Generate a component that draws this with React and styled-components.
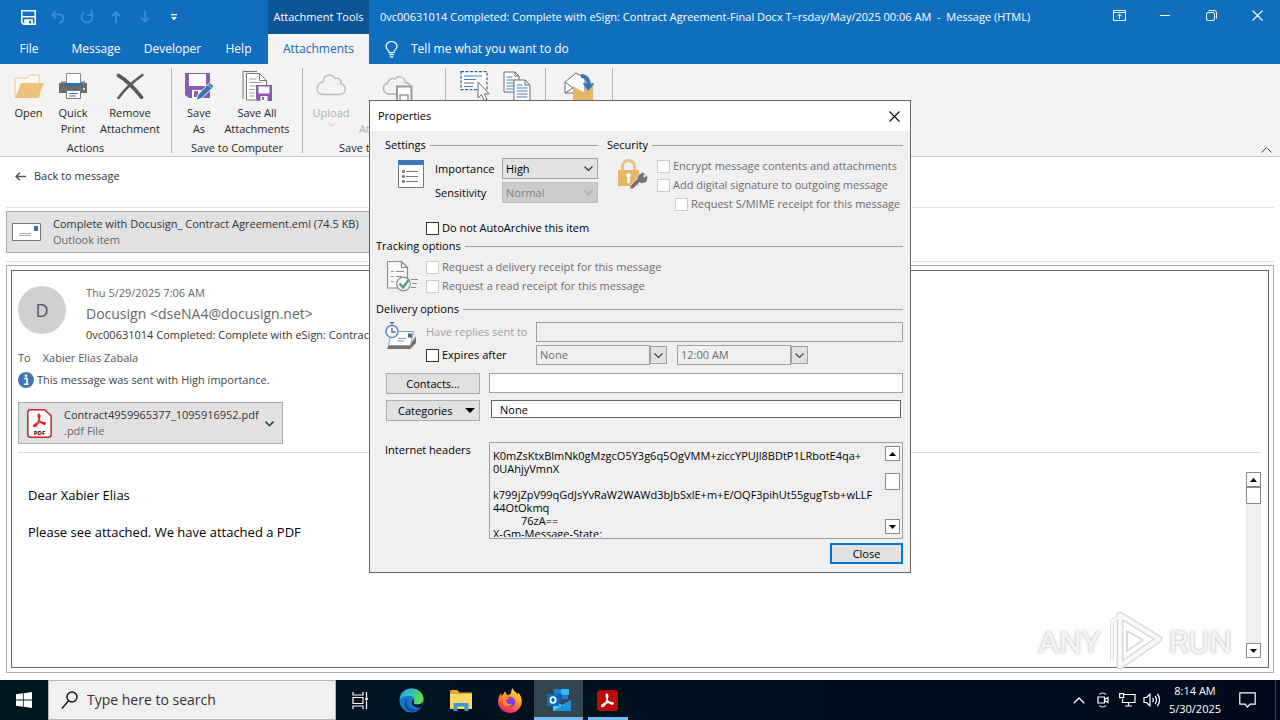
import React from "react";
import styled, { createGlobalStyle } from "styled-components";

function App() {
  return (
    <>
      <GlobalStyle />
      <Screen>
        <MessageWindow>
          <WindowHeader />
          <Ribbon />
          <Message />
        </MessageWindow>
        <Taskbar />
        <Overlay>
          <PropertiesDialog />
        </Overlay>
      </Screen>
    </>
  );
}

function WindowHeader() {
  return (
    <header>
      <TitleBar>
        <QuickAccess>
          <QuickButton aria-label="Save">
            <svg width="15" height="15" viewBox="0 0 15 15">
              <path d="M0.8 0.8h13.4v13.4H2.6L0.8 12.4z" fill="none" stroke="#fff" strokeWidth="1.6" />
              <path d="M1 6.8h13M4 14v-4h7v4" fill="none" stroke="#fff" strokeWidth="1.6" />
              <path d="M5 10.5h3V14H5z" fill="#fff" />
            </svg>
          </QuickButton>
          <QuickButton aria-label="Undo" disabled>
            <svg width="14" height="14" viewBox="0 0 14 14" fill="none" stroke="#3b8edb" strokeWidth="1.8">
              <path d="M5 0.8L1.4 4.4L5 8M1.6 4.4h6.2c6 0 6.2 7.6 0.4 8.2" />
            </svg>
          </QuickButton>
          <QuickButton aria-label="Redo" disabled>
            <svg width="14" height="14" viewBox="0 0 14 14" fill="none" stroke="#3b8edb" strokeWidth="1.8">
              <path d="M4 2.6A5.4 5.4 0 1 0 11.2 3.6M7.4 5.2h4.4V0.6" />
            </svg>
          </QuickButton>
          <QuickButton aria-label="Previous item" disabled>
            <svg width="10" height="12" viewBox="0 0 10 12" fill="none" stroke="#3b8edb" strokeWidth="1.8">
              <path d="M5 12V1.4M1 5.4l4-4 4 4" />
            </svg>
          </QuickButton>
          <QuickButton aria-label="Next item" disabled>
            <svg width="10" height="12" viewBox="0 0 10 12" fill="none" stroke="#3b8edb" strokeWidth="1.8">
              <path d="M5 0v10.6M1 6.6l4 4 4-4" />
            </svg>
          </QuickButton>
          <QuickButton aria-label="Customize Quick Access Toolbar">
            <svg width="6" height="7" viewBox="0 0 6 7" fill="#fff">
              <path d="M0 0h6v1.2H0zM0 3h6L3 6.4z" />
            </svg>
          </QuickButton>
        </QuickAccess>
        <ToolsLabel>Attachment Tools</ToolsLabel>
        <WindowTitle>
          0vc00631014 Completed: Complete with eSign: Contract Agreement-Final Docx T=rsday/May/2025 00:06 AM
          &nbsp;-&nbsp; Message (HTML)
        </WindowTitle>
        <WindowButton aria-label="Ribbon Display Options">
          <svg width="13" height="11" viewBox="0 0 13 11" fill="none" stroke="#fff">
            <path d="M0.5 0.5h12v10h-12zM0.5 2.5h12M6.5 9V4.4M4.3 6.4l2.2-2.2 2.2 2.2" />
          </svg>
        </WindowButton>
        <WindowButton aria-label="Minimize">
          <svg width="10" height="11" viewBox="0 0 10 11" stroke="#fff">
            <path d="M0 5.5h10" />
          </svg>
        </WindowButton>
        <WindowButton aria-label="Restore">
          <svg width="11" height="11" viewBox="0 0 11 11" fill="none" stroke="#fff">
            <rect x="0.5" y="2.5" width="8" height="8" rx="1.5" />
            <path d="M2.5 0.5h6a2 2 0 0 1 2 2v6" />
          </svg>
        </WindowButton>
        <WindowButton aria-label="Close window">
          <CloseGlyph color="#fff" />
        </WindowButton>
      </TitleBar>
      <TabBar>
        <Tabs>
          <Tab $width={58}>File</Tab>
          <Tab $width={76}>Message</Tab>
          <Tab $width={77}>Developer</Tab>
          <Tab $width={55}>Help</Tab>
        </Tabs>
        <ActiveTab>Attachments</ActiveTab>
        <TellMe>
          <svg width="13" height="17" viewBox="0 0 13 17" fill="none" stroke="#fff" strokeWidth="1.2">
            <path d="M4.2 11.6C4.2 9 1 8.6 1 5.6a5.4 5 0 0 1 11 0c0 3-3.2 3.4-3.2 6zM4.2 13.6h4.6M4.8 15.8h3.4" />
          </svg>
          Tell me what you want to do
        </TellMe>
      </TabBar>
    </header>
  );
}

function Ribbon() {
  return (
    <RibbonBar>
      <RibbonGroup $width={172}>
        <RibbonButtons>
          <RibbonButton $width={41}>
            <OpenIcon />
            Open
          </RibbonButton>
          <RibbonButton $width={48}>
            <PrinterIcon />
            Quick Print
          </RibbonButton>
          <RibbonButton $width={66}>
            <svg width="30" height="30" viewBox="0 0 30 30" fill="none" stroke="#595959" strokeLinecap="round">
              <path d="M3.4 4.4C11 9 20 18 26.6 26.4" strokeWidth="3.6" />
              <path d="M27.4 4C19 10 9 19 3.4 27" strokeWidth="2.6" />
            </svg>
            Remove Attachment
          </RibbonButton>
        </RibbonButtons>
        <GroupLabel>Actions</GroupLabel>
      </RibbonGroup>
      <RibbonGroup $width={131}>
        <RibbonButtons>
          <RibbonButton $width={40}>
            <SaveAsIcon />
            <span>
              Save
              <br />
              As
            </span>
          </RibbonButton>
          <RibbonButton $width={76}>
            <SaveAllIcon />
            Save All Attachments
          </RibbonButton>
        </RibbonButtons>
        <GroupLabel>Save to Computer</GroupLabel>
      </RibbonGroup>
      <RibbonGroup $width={143}>
        <RibbonButtons $start>
          <RibbonButton $width={52} disabled>
            <svg width="32" height="30" viewBox="0 0 32 30" fill="none" stroke="#b9b9b9" strokeWidth="1.3">
              <path d={CLOUD} />
            </svg>
            Upload
            <Chevron color="#b9b9b9" size={7} />
          </RibbonButton>
          <RibbonButton $width={82} disabled>
            <svg width="32" height="30" viewBox="0 0 32 30" fill="none" stroke="#b0b0b0" strokeWidth="1.3">
              <path d="M14 23H6.500a5.500 5.500 0 0 1-0.800-10.800C6 8.500 10 6.500 13 8c3-4.500 10-2 10 3.500 3 0 5.500 2 5.500 4" />
              <path d="M15 15.600h14.400V30H15z" fill="#fff" stroke="#9a9a9a" strokeWidth="2" />
              <path d="M18 29v-5h8v5" stroke="#9a9a9a" strokeWidth="1.600" />
            </svg>
            Save All
            <SplitLabel>
              Attachments
              <Chevron color="#b9b9b9" size={7} />
            </SplitLabel>
          </RibbonButton>
        </RibbonButtons>
        <GroupLabel>Save to Cloud</GroupLabel>
      </RibbonGroup>
      <RibbonGroup $width={100}>
        <RibbonButtons>
          <RibbonButton $width={42} aria-label="Select All">
            <svg width="30" height="30" viewBox="0 0 30 30" fill="none">
              <path d="M1 0.700h26v18H1z" fill="#fff" stroke="#33618c" strokeWidth="1.200" strokeDasharray="3 1.500" />
              <path d="M4 5h18M4 8.500h12M4 12h10M4 15.500h9" stroke="#3f7ebd" strokeWidth="1.200" />
              <path d="M18 11v16l3.600-3.400 2.800 6 2.600-1.200-2.800-5.600h5z" fill="#fff" stroke="#6b6b6b" />
            </svg>
          </RibbonButton>
          <RibbonButton $width={42} aria-label="Copy">
            <svg width="28" height="30" viewBox="0 0 28 30" fill="#fff" stroke="#6b6b6b">
              <path d="M1 1h11l4 4v16H1zM12 1v4h4" />
              <path d="M3.500 6h6M3.500 9h10M3.500 12h10M3.500 15h10M3.500 18h8" stroke="#3f7ebd" />
              <path d="M11 9h11l5 5v16H11zM22 9v5h5" />
              <path d="M13.500 14h6M13.500 17h11M13.500 20h11M13.500 23h11M13.500 26h11" stroke="#3f7ebd" />
            </svg>
          </RibbonButton>
        </RibbonButtons>
      </RibbonGroup>
      <RibbonGroup $width={67}>
        <RibbonButtons>
          <RibbonButton $width={54} aria-label="Show Message">
            <svg width="30" height="30" viewBox="0 0 30 30" fill="none">
              <path d="M1 22V11L12 2l9 5v15z" fill="#fff" stroke="#6b6b6b" />
              <path d="M1 11l8 6-8 5" stroke="#6b6b6b" />
              <path d="M9 15l10 6 10-6v15H9z" fill="#e8b766" />
              <path d="M17 5c6 0 8 5 8 10" stroke="#3a76b0" strokeWidth="4" />
              <path d="M18.500 12h4l2.500 3 3-3h1.500v2L24 20z" fill="#3a76b0" />
            </svg>
          </RibbonButton>
        </RibbonButtons>
      </RibbonGroup>
      <CollapseButton aria-label="Collapse the Ribbon">
        <svg width="11" height="6" viewBox="0 0 11 6" fill="none" stroke="#444">
          <path d="M0.500 5.500l5-5 5 5" />
        </svg>
      </CollapseButton>
    </RibbonBar>
  );
}

function Message() {
  return (
    <MessageArea>
      <BackRow>
        <BackButton>
          <svg width="11" height="9" viewBox="0 0 11 9" fill="none" stroke="#555" strokeWidth="1.500">
            <path d="M11 4.500H1M4.800 0.700L1 4.500l3.800 3.800" />
          </svg>
          Back to message
        </BackButton>
      </BackRow>
      <AttachmentStrip>
        <Attachment $width={420}>
          <svg width="29" height="18" viewBox="0 0 29 18">
            <path d="M0.500 0.500h28v17h-28z" fill="#fff" stroke="#777" />
            <path d="M22 3h4v5h-4z" fill="#3d6ea8" />
            <path d="M7 10.500h12M7 12.500h12" stroke="#aaa" />
          </svg>
          <FileText>
            <span>Complete with Docusign_ Contract Agreement.eml (74.5 KB)</span>
            <small>Outlook item</small>
          </FileText>
        </Attachment>
      </AttachmentStrip>
      <OuterFrame>
        <InnerFrame>
          <Sender>
            <Avatar>D</Avatar>
            <SenderText>
              <p>Thu 5/29/2025 7:06 AM</p>
              <h2>Docusign &lt;dseNA4@docusign.net&gt;</h2>
              <h1>0vc00631014 Completed: Complete with eSign: Contract Agreement-Final Docx</h1>
            </SenderText>
          </Sender>
          <Recipient>
            <span>To</span> Xabier Elias Zabala
          </Recipient>
          <InfoBar>
            <svg width="16" height="16" viewBox="0 0 16 16">
              <circle cx="8" cy="8" r="8" fill="#3e78b3" />
              <path d="M6.200 6.500H9V12h1.200M5.800 12.300h4.600" stroke="#fff" strokeWidth="1.600" fill="none" />
              <circle cx="8" cy="3.700" r="1.300" fill="#fff" />
            </svg>
            This message was sent with High importance.
          </InfoBar>
          <Attachment $width={265} $inset>
            <PdfIcon />
            <FileText>
              <span>Contract4959965377_1095916952.pdf</span>
              <small>.pdf File</small>
            </FileText>
            <Chevron color="#444" size={9} weight={1.6} />
          </Attachment>
          <BodyArea>
            <BodyText>
              <p>Dear Xabier Elias</p>
              <p>Please see attached. We have attached a PDF</p>
            </BodyText>
            <ScrollBar />
          </BodyArea>
        </InnerFrame>
      </OuterFrame>
      <Watermark>
        <span>ANY</span>
        <svg width="56" height="62" viewBox="0 0 56 62" fill="none" strokeLinejoin="round">
          <path d="M13 4l39 24-39 27z" stroke="#d9d9d9" strokeWidth="7" />
          <path d="M13 4l39 24-39 27z" stroke="#f9f9f9" strokeWidth="4" />
          <path d="M5 50V10l6-3" stroke="#dedede" strokeWidth="4" />
          <path d="M5 50V10l6-3" stroke="#fafafa" strokeWidth="2" />
          <path d="M20 20l16 9-16 11z" stroke="#dadada" strokeWidth="2" />
        </svg>
        <span>RUN</span>
      </Watermark>
    </MessageArea>
  );
}

function PropertiesDialog() {
  return (
    <Dialog role="dialog" aria-labelledby="dialog-title">
      <DialogTitle>
        <span id="dialog-title">Properties</span>
        <DialogClose aria-label="Close dialog">
          <CloseGlyph color="#000" />
        </DialogClose>
      </DialogTitle>
      <DialogBody>
        <TopSections>
          <Section $left={9}>
            <Legend>Settings</Legend>
            <SettingsGrid>
              <svg width="26" height="28" viewBox="0 0 26 28">
                <path d="M0.500 1h25v26.500h-25z" fill="#fff" stroke="#777" />
                <path d="M0 0h26v5H0z" fill="#3c76b4" />
                <path d="M8 11.500h12M8 16.500h12M8 21.500h12" stroke="#777" />
                <path d="M4 11.500h3M4 16.500h3M4 21.500h3" stroke="#777" strokeWidth="2.400" />
              </svg>
              <label htmlFor="importance">Importance</label>
              <SelectBox>
                <select id="importance" defaultValue="High">
                  <option>High</option>
                </select>
                <Chevron color="#333" size={9} />
              </SelectBox>
              <label htmlFor="sensitivity">Sensitivity</label>
              <SelectBox $disabled>
                <select id="sensitivity" defaultValue="Normal" disabled>
                  <option>Normal</option>
                </select>
                <Chevron color="#a5a5a5" size={9} />
              </SelectBox>
            </SettingsGrid>
            <ArchiveRow>
              <Check label="Do not AutoArchive this item" />
            </ArchiveRow>
          </Section>
          <Section>
            <Legend>Security</Legend>
            <SecurityRow>
              <LockIcon />
              <CheckList>
                <Check label="Encrypt message contents and attachments" disabled />
                <Check label="Add digital signature to outgoing message" disabled />
                <Check label="Request S/MIME receipt for this message" disabled indent />
              </CheckList>
            </SecurityRow>
          </Section>
        </TopSections>

        <Legend>Tracking options</Legend>
        <TrackingRow>
          <TrackingIcon />
          <CheckList>
            <Check label="Request a delivery receipt for this message" disabled />
            <Check label="Request a read receipt for this message" disabled />
          </CheckList>
        </TrackingRow>

        <Legend>Delivery options</Legend>
        <DeliveryGrid>
          <DeliveryIcon />
          <MutedLabel htmlFor="replies">Have replies sent to</MutedLabel>
          <TextBox id="replies" disabled />
          <Check label="Expires after" />
          <ExpiryFields>
            <ComboBox label="Expiry date" value="None" />
            <ComboBox label="Expiry time" value="12:00 AM" />
          </ExpiryFields>
        </DeliveryGrid>

        <ContactsGrid>
          <DialogButton>Contacts...</DialogButton>
          <TextBox aria-label="Contacts" />
          <DialogButton $menu>
            <span>
              Cate<u>g</u>ories
            </span>
            <svg width="10" height="5" viewBox="0 0 10 5">
              <path d="M0 0h10L5 5z" />
            </svg>
          </DialogButton>
          <CategoriesBox aria-label="Categories" defaultValue="None" />
        </ContactsGrid>

        <HeadersRow>
          <label htmlFor="headers">Internet headers</label>
          <HeadersBox>
            <textarea id="headers" defaultValue={HEADERS} spellCheck={false} />
            <ScrollBar small />
          </HeadersBox>
        </HeadersRow>
        <DialogFooter>
          <DefaultButton>Close</DefaultButton>
        </DialogFooter>
      </DialogBody>
    </Dialog>
  );
}

function Check({ label, disabled, indent }) {
  return (
    <CheckLabel $disabled={disabled} $indent={indent}>
      <input type="checkbox" disabled={disabled} />
      {label}
    </CheckLabel>
  );
}

function ComboBox({ label, value }) {
  return (
    <Combo>
      <select aria-label={label} defaultValue={value} disabled>
        <option>{value}</option>
      </select>
      <span>
        <Chevron color="#444" size={9} />
      </span>
    </Combo>
  );
}

function ScrollBar({ small }) {
  return (
    <ScrollTrack $small={small}>
      <button aria-label="Scroll up">
        <svg width="7" height="4" viewBox="0 0 7 4">
          <path d="M0 4h7L3.500 0z" />
        </svg>
      </button>
      <i />
      <button aria-label="Scroll down">
        <svg width="7" height="4" viewBox="0 0 7 4">
          <path d="M0 0h7L3.500 4z" />
        </svg>
      </button>
    </ScrollTrack>
  );
}

function Taskbar() {
  return (
    <TaskbarRow>
      <TaskButton aria-label="Start">
        <svg width="16" height="16" viewBox="0 0 16 16" fill="#fff">
          <path d="M0 2.300L6.900 1.300v6.300H0zM7.700 1.200L16 0v7.600H7.700zM0 8.400h6.900v6.300L0 13.700zM7.700 8.400H16V16l-8.300-1.200z" />
        </svg>
      </TaskButton>
      <SearchBox>
        <svg width="17" height="19" viewBox="0 0 17 19" fill="none" stroke="#111" strokeWidth="1.400">
          <circle cx="11" cy="6" r="5" />
          <path d="M7.500 9.800L1 17.500" />
        </svg>
        <input aria-label="Search" placeholder="Type here to search" />
      </SearchBox>
      <TaskButton aria-label="Task View">
        <svg width="17" height="17" viewBox="0 0 17 17" fill="none" stroke="#fff" strokeWidth="1.200">
          <path d="M1 0v3h10V0M1 5.500h10v6H1zM1 17v-3h10v3M14.500 0v5M14.500 8.500V17" />
          <path d="M13.300 5.500h2.500V8h-2.500z" fill="#fff" stroke="none" />
        </svg>
      </TaskButton>
      <Apps>
        <AppButton aria-label="Microsoft Edge">
          <EdgeIcon />
        </AppButton>
        <AppButton aria-label="File Explorer">
          <svg width="22" height="21" viewBox="0 0 22 21">
            <path d="M0 1.500C0 0.700 0.600 0 1.400 0h6L9.500 2.500H22V8H0z" fill="#e3a52a" />
            <path d="M0 4h22v15H0z" fill="#fbd765" />
            <path d="M3.500 21v-8h15v8h-4v-4.500h-7V21z" fill="#3f95d6" />
          </svg>
        </AppButton>
        <AppButton aria-label="Firefox">
          <FirefoxIcon />
        </AppButton>
        <AppButton aria-label="Outlook" $active>
          <svg width="24" height="24" viewBox="0 0 24 24">
            <path d="M7 1h14v10H7z" fill="#1a7fd4" />
            <path d="M14 1h8v6h-8z" fill="#35b8f1" />
            <path d="M7 6h8v8H7z" fill="#0f5ca8" />
            <path d="M6 12l9 5 9-5v11H6z" fill="#4fc3f4" />
            <path d="M6 23l18-11v11z" fill="#1f8fdd" />
            <path d="M0 6h12v12H0z" fill="#0f6cbd" />
            <ellipse cx="6" cy="12" rx="2.600" ry="3" fill="none" stroke="#fff" strokeWidth="1.700" />
          </svg>
        </AppButton>
        <AppButton aria-label="Adobe Acrobat" $running>
          <svg width="21" height="21" viewBox="0 0 21 21" fill="none">
            <rect width="21" height="21" rx="3" fill="#b80c06" />
            <path d={ACROBAT} stroke="#fff" strokeWidth="1.400" />
          </svg>
        </AppButton>
      </Apps>
      <Tray>
        <TrayButton aria-label="Show hidden icons">
          <svg width="12" height="7" viewBox="0 0 12 7" fill="none" stroke="#fff" strokeWidth="1.300">
            <path d="M0.700 6.300L6 1l5.300 5.300" />
          </svg>
        </TrayButton>
        <TrayButton aria-label="Meet Now">
          <svg width="12" height="16" viewBox="0 0 12 16" fill="none" stroke="#fff" strokeWidth="1.200">
            <path d="M1 5h6.500v6H1zM7.500 7.500L11 5.500v5l-3.500-2M2.500 2.500C4 0.500 7.500 0.500 9 2.500M2.500 13.500c1.500 2 5 2 6.500 0" />
          </svg>
        </TrayButton>
        <TrayButton aria-label="Network">
          <svg width="17" height="14" viewBox="0 0 17 14" fill="none" stroke="#fff" strokeWidth="1.200">
            <path d="M5 1.500h11v8H3.500V6M0.600 0.600h4v4h-4zM9.500 9.500V13M6 13h7" />
          </svg>
        </TrayButton>
        <TrayButton aria-label="Volume">
          <svg width="17" height="14" viewBox="0 0 17 14" fill="none" stroke="#fff" strokeWidth="1.200">
            <path d="M1 4.500h2.500L7 1.200v11.600L3.500 9.500H1zM9.500 5c1 1.200 1 2.800 0 4M12 3c2 2.200 2 5.800 0 8M14.300 1c3 3.300 3 8.700 0 12" />
          </svg>
        </TrayButton>
        <Clock>
          <span>8:14 AM</span>
          <span>5/30/2025</span>
        </Clock>
        <NotificationButton aria-label="Notifications">
          <svg width="17" height="16" viewBox="0 0 17 16" fill="none" stroke="#fff" strokeWidth="1.200">
            <path d="M0.800 0.800h15.400v11.400h-5.200L8.500 15 6 12.200H0.800z" />
          </svg>
        </NotificationButton>
      </Tray>
    </TaskbarRow>
  );
}

/* Icons */

const CLOUD =
  "M8 23.500h17a5.500 5.500 0 0 0 1-10.800c1-4-3-6.500-6-5C17 2 8 3.500 8.500 11 1 11-1 23 8 23.500z";

const ACROBAT =
  "M9.800 4.200c1.800 0 0.600 5.200-0.600 8-0.900 2-2.400 4.400-3.800 4.400-1.700-0.400 0.600-3 4.200-3.800 2.800-0.700 6.800-0.700 6.600 0.800-0.200 1.300-3.200 0.200-5-2.200C9.600 9.200 8.600 4.400 9.800 4.200z";

function CloseGlyph({ color }) {
  return (
    <svg width="11" height="11" viewBox="0 0 11 11" stroke={color} strokeWidth="1.100">
      <path d="M0.500 0.500l10 10M10.500 0.500l-10 10" />
    </svg>
  );
}

function Chevron({ color, size, weight = 1.2 }) {
  return (
    <svg width={size} height={size} viewBox="0 0 9 9" fill="none" stroke={color} strokeWidth={weight}>
      <path d="M0.500 2.500l4 4 4-4" />
    </svg>
  );
}

function OpenIcon() {
  return (
    <svg width="30" height="30" viewBox="0 0 30 30">
      <path d="M1 26V7h12l2.500-3H25v22z" fill="#fffaf0" stroke="#ecc68c" />
      <path d="M1 27l6-15h23l-6 15z" fill="#ecc27c" />
    </svg>
  );
}

function PrinterIcon() {
  return (
    <svg width="30" height="30" viewBox="0 0 30 30">
      <path d="M1 12h28v10H1z" fill="#6a6a6a" />
      <path d="M3 10.500h24V13H3z" fill="#7b7b7b" />
      <path d="M8.500 2.500h14v10h-14z" fill="#fff" stroke="#888" />
      <path d="M7 12h17v3H7z" fill="#2f70b0" />
      <path d="M8.500 19.500h14v8h-14z" fill="#fff" stroke="#777" />
      <path d="M11 22.500h9M11 25h7" stroke="#3f7ebd" strokeWidth="1.200" />
      <circle cx="26" cy="18" r="1" fill="#fff" />
    </svg>
  );
}

function SaveAsIcon() {
  return (
    <svg width="30" height="30" viewBox="0 0 30 30">
      <path d="M1 2h25v25H5l-4-3z" fill="#8a5bb0" />
      <path d="M5 3h17v12H5z" fill="#fff" />
      <path d="M8 19h11v8H8z" fill="#fff" />
      <path d="M10 20h4v6h-4z" fill="#8a5bb0" />
      <path d="M12 29.500l2-6L26 11.500l4 4L18 27z" fill="#3a76b0" stroke="#f3f3f3" />
      <path d="M24 13.500l4 4" stroke="#cfe0f0" />
    </svg>
  );
}

function SaveAllIcon() {
  return (
    <svg width="30" height="30" viewBox="0 1 30 30">
      <path d="M1 29V1.500h14" fill="none" stroke="#777" />
      <path d="M4.500 3.500h13l7 7V30h-20z" fill="#fff" stroke="#777" />
      <path d="M17.500 3.500v7h7" fill="none" stroke="#777" />
      <path d="M7.500 9h7M7.500 12.500h12M7.500 16h7M7.500 19.500h5M7.500 23h5M7.500 26h5" stroke="#999" />
      <path d="M14 15h16v16H16l-2-2z" fill="#8a5bb0" />
      <path d="M16.500 16.500h11v7h-11zM18.500 26h7v5h-7z" fill="#fff" />
      <path d="M20 27h2v3h-2z" fill="#8a5bb0" />
    </svg>
  );
}

function PdfIcon() {
  return (
    <svg width="25" height="29" viewBox="0 0 25 29">
      <path d="M3.500 0.800h14l6.700 6v18.700c0 1.500-1 2.700-2.700 2.700h-18c-1.700 0-2.700-1-2.700-2.700V3.500c0-1.700 1-2.700 2.700-2.700z" fill="#fff" stroke="#cc1f2c" strokeWidth="1.500" />
      <path d={ACROBAT} transform="translate(2 1)" fill="none" stroke="#e02626" strokeWidth="1.500" />
      <text x="12.500" y="25.500" fontSize="6" fontWeight="700" fontFamily="Open Sans, sans-serif" textAnchor="middle">
        PDF
      </text>
    </svg>
  );
}

function LockIcon() {
  return (
    <svg width="32" height="32" viewBox="0 0 32 32" fill="none">
      <path d="M5.500 12V8.500a6 6 0 0 1 12 0V12" stroke="#ecc27c" strokeWidth="3" />
      <path d="M1 12h21v16H1z" fill="#e8b766" />
      <path d="M11.500 15a2.500 2.500 0 0 1 1.300 4.600V25h-2.600v-5.400A2.500 2.500 0 0 1 11.500 15z" fill="#fff" />
      <path d="M21 17l5-3 5 5-1.500 5.500-5.500 1-1.500-1-6.500 6.500h-3v-3l7-7z" fill="#737373" stroke="#f0f0f0" strokeWidth="0.800" />
      <circle cx="27.500" cy="18" r="1.200" fill="#fff" />
    </svg>
  );
}

function TrackingIcon() {
  return (
    <svg width="31" height="31" viewBox="0 0 31 31" fill="none" stroke="#8a8a8a">
      <path d="M0.500 0.500h14l6 6V27h-20z" fill="#f9f9f9" strokeWidth="1.200" />
      <path d="M14.500 0.500v6h6M4 10.500h2.500M4 15.500h2.500M4 20.500h2.500M9 10.500h8M9 15.500h6M9 20.500h2M24 18.500h7M25 22.500h5M24 26.500h5" strokeWidth="1.200" />
      <circle cx="16.500" cy="23" r="6.800" fill="#f6f6f6" strokeWidth="1.200" />
      <path d="M12.500 22.500l3.500 4 6-8" stroke="#5f9c86" strokeWidth="2.400" />
    </svg>
  );
}

function DeliveryIcon() {
  return (
    <svg width="32" height="29" viewBox="0 0 32 29" fill="none">
      <path d="M5 19l-3 8h23l6-6v-7l-4 6H5z" fill="#737373" />
      <path d="M6.500 9.500h22l-3 14H3.500z" fill="#fff" stroke="#9a9a9a" />
      <path d="M23 11.500h4v4h-4z" fill="#3c6ea6" />
      <path d="M13 16.500h8M12 19h7" stroke="#999" />
      <circle cx="7" cy="9.500" r="6" fill="#f7f7f7" stroke="#5d8fc4" strokeWidth="1.600" />
      <path d="M7 0v3M5 0.600h4M7 6v4h3.500" stroke="#4c6f93" strokeWidth="1.300" />
    </svg>
  );
}

function EdgeIcon() {
  return (
    <svg width="25" height="25" viewBox="0 0 25 25">
      <defs>
        <linearGradient id="edge-top" x1="0" y1="0" x2="1" y2="0.400">
          <stop offset="0" stopColor="#1ba3e0" />
          <stop offset="0.500" stopColor="#35c1b8" />
          <stop offset="1" stopColor="#66d84e" />
        </linearGradient>
      </defs>
      <circle cx="12.500" cy="12.500" r="12" fill="#1476cc" />
      <path d="M0.500 12C1 5 6 0.500 12.500 0.500c7 0 12 5 12 10 0 4-3 6-6 6-2.500 0-4-1-3.500-2 1-2 0.500-6-4-6.500C6 7.500 2 9 0.500 12z" fill="url(#edge-top)" />
      <path d="M8.500 11C6 16 10 22 17 21.500c2 0 4-1 5.500-2.500-5 7.500-16 6-17-2.500C5.200 14 6.500 12 8.500 11z" fill="#0f4f9c" />
      <path d="M14.800 14.500c-0.500 1 1 2.200 3.700 2.100 2.500 0 4-1 5.500-3L22.800 19c-4 2-10-0.500-10-4.500 0-1.500 1-2.500 2-3z" fill="#001722" />
    </svg>
  );
}

function FirefoxIcon() {
  return (
    <svg width="24" height="25" viewBox="0 0 24 25">
      <defs>
        <linearGradient id="fox" x1="0.800" y1="0" x2="0.300" y2="1">
          <stop offset="0" stopColor="#fff04a" />
          <stop offset="0.450" stopColor="#ff9324" />
          <stop offset="1" stopColor="#f5156c" />
        </linearGradient>
      </defs>
      <path d="M14.500 0c0.500 3 4 4.500 5.500 6.500L20 4.500c3 3 4 6 3.800 9.500C23.500 20 18.500 25 12 25S0 20 0 13.500C0 10 1.500 7 3 5l0.500 3C5 6.500 6 5.500 6.500 3.500 8 4.500 8.500 6 9 7c2 0 3-0.500 4-1.500C13 3.500 13.500 1.500 14.500 0z" fill="url(#fox)" />
      <circle cx="12" cy="14" r="5.200" fill="#7a40d8" />
      <path d="M4 10c3-2 6-1 8 0.500-2 0-2.500 1.500-4 2 0 3 3 4.500 6 3.500-2 3.500-8 3-9-1z" fill="#ff8a1f" />
    </svg>
  );
}

const HEADERS = `K0mZsKtxBlmNk0gMzgcO5Y3g6q5OgVMM+ziccYPUJl8BDtP1LRbotE4qa+
0UAhjyVmnX

k799jZpV99qGdJsYvRaW2WAWd3bJbSxlE+m+E/OQF3pihUt55gugTsb+wLLF
44OtOkmq
\t76zA==
X-Gm-Message-State:`;

/* Base */

const GlobalStyle = createGlobalStyle`
  *, *::before, *::after {
    box-sizing: border-box;
  }

  body {
    margin: 0;
    font-family: "Open Sans", "Noto Sans", sans-serif;
    font-size: 11px;
    line-height: 16px;
    color: #000;
  }

  h1, h2, p {
    margin: 0;
    font-weight: 400;
  }

  button, input, select, textarea {
    margin: 0;
    padding: 0;
    border: 0;
    border-radius: 0;
    background: none;
    font: inherit;
    color: inherit;
  }

  svg {
    display: block;
    flex-shrink: 0;
  }
`;

const Screen = styled.div`
  position: relative;
  display: flex;
  flex-direction: column;
  min-height: 100vh;
  background: #fff;
`;

const MessageWindow = styled.main`
  flex: 1;
  display: flex;
  flex-direction: column;
`;

/* Window header */

const TitleBar = styled.div`
  display: flex;
  height: 34px;
  background: #106ebe;
  color: #fff;
`;

const QuickAccess = styled.div`
  display: flex;
  width: 268px;
  padding-left: 14px;
`;

const QuickButton = styled.button`
  display: grid;
  place-items: center;
  width: 29px;
`;

const ToolsLabel = styled.div`
  display: grid;
  place-items: center;
  width: 101px;
  background: #0c5595;
  font-size: 11px;
  white-space: nowrap;
`;

const WindowTitle = styled.div`
  flex: 1;
  align-self: center;
  padding-left: 11px;
  line-height: 18px;
  white-space: nowrap;
`;

const WindowButton = styled.button`
  display: grid;
  justify-items: center;
  align-content: start;
  width: 46px;
  padding-top: 10px;
`;

const TabBar = styled.nav`
  display: flex;
  height: 30px;
  background: #106ebe;
  color: #fff;
  font-size: 12px;
`;

const Tabs = styled.div`
  display: flex;
  width: 268px;
`;

const Tab = styled.button`
  width: ${({ $width }) => $width}px;
  text-align: center;
`;

const ActiveTab = styled.button`
  width: 101px;
  background: #f3f3f3;
  color: #1b64a8;
`;

const TellMe = styled.button`
  display: flex;
  align-items: center;
  gap: 13px;
  padding-left: 16px;
`;

/* Ribbon */

const RibbonBar = styled.section`
  display: flex;
  height: 93px;
  padding: 4px 0 3px;
  background: #f3f3f3;
  border-bottom: 1px solid #c8c8c8;
  color: #262626;
`;

const RibbonGroup = styled.div`
  display: flex;
  flex-direction: column;
  justify-content: space-between;
  width: ${({ $width }) => $width}px;
  border-right: 1px solid #b4b4b4;
`;

const RibbonButtons = styled.div`
  display: flex;
  justify-content: ${({ $start }) => ($start ? "flex-start" : "center")};
  padding-left: ${({ $start }) => ($start ? 2 : 0)}px;
`;

const RibbonButton = styled.button`
  display: flex;
  flex-direction: column;
  align-items: center;
  gap: 0;
  width: ${({ $width }) => $width}px;
  padding-top: 3px;
  line-height: 16px;
  color: ${({ disabled }) => (disabled ? "#b1b1b1" : "#262626")};

  > svg:first-child {
    margin-bottom: 4px;
  }
`;

const SplitLabel = styled.span`
  display: flex;
  align-items: center;
  gap: 6px;
`;

const GroupLabel = styled.div`
  text-align: center;
  line-height: 10px;
`;

const CollapseButton = styled.button`
  align-self: flex-end;
  margin-left: auto;
  padding: 0 8px 0 0;
`;

/* Message */

const MessageArea = styled.div`
  position: relative;
  flex: 1;
  display: flex;
  flex-direction: column;
  padding: 0 6px 7px;
`;

const BackRow = styled.div`
  height: 51px;
  padding: 11px 9px;
  border-bottom: 1px solid #e1e1e1;
`;

const BackButton = styled.button`
  display: flex;
  align-items: center;
  gap: 8px;
  color: #333;
`;

const AttachmentStrip = styled.div`
  padding: 3px 0 8px;
  border-bottom: 1px solid #e1e1e1;
`;

const Attachment = styled.button`
  display: flex;
  align-items: center;
  width: ${({ $width }) => $width}px;
  height: 42px;
  margin-top: ${({ $inset }) => ($inset ? 14 : 0)}px;
  padding: 0 ${({ $inset }) => ($inset ? 8 : 5)}px;
  background: #e1e1e1;
  border: 1px solid #ababab;
  text-align: left;

  > svg:first-child {
    margin-right: 12px;
  }
`;

const FileText = styled.span`
  flex: 1;
  min-width: 0;
  display: flex;
  flex-direction: column;
  color: #333;
  white-space: nowrap;

  small {
    font-size: 11px;
    color: #666;
  }
`;

const OuterFrame = styled.div`
  flex: 1;
  display: flex;
  margin-top: 3px;
  padding: 4px;
  border: 1px solid #ababab;
`;

const InnerFrame = styled.article`
  flex: 1;
  display: flex;
  flex-direction: column;
  padding: 14px 7px 9px 6px;
  border: 1px solid #666;
  color: #444;
`;

const Sender = styled.div`
  display: flex;
  gap: 20px;
`;

const Avatar = styled.div`
  display: grid;
  place-items: center;
  width: 48px;
  height: 48px;
  margin-top: 1px;
  border-radius: 50%;
  background: #d0d0d0;
  color: #555;
  font-size: 18px;
`;

const SenderText = styled.div`
  p {
    color: #666;
  }

  h2 {
    font-size: 14px;
    line-height: 26px;
    color: #666;
  }

  h1 {
    font-size: 11px;
    line-height: 16px;
    color: #333;
  }
`;

const Recipient = styled.div`
  display: flex;
  gap: 12px;
  margin-top: 7px;
  color: #555;
`;

const InfoBar = styled.div`
  display: flex;
  gap: 3px;
  margin-top: 6px;
`;

const BodyArea = styled.div`
  flex: 1;
  display: flex;
  justify-content: space-between;
  margin-top: 8px;
  padding-top: 19px;
  border-top: 1px solid #d9d9d9;
`;

const BodyText = styled.div`
  display: flex;
  flex-direction: column;
  gap: 19px;
  padding: 14px 10px;
  font-size: 13px;
  line-height: 18px;
  color: #000;
`;

const ScrollTrack = styled.div`
  display: flex;
  flex-direction: column;
  width: 15px;
  background: #f0f0f0;

  button {
    display: grid;
    place-items: center;
    height: 15px;
    background: #fff;
    border: 1px solid #8a8a8a;
  }

  i {
    height: 17px;
    margin: ${({ $small }) => ($small ? "12px 0 auto" : "0 0 auto")};
    background: #fff;
    border: 1px solid #8a8a8a;
  }
`;

const Watermark = styled.div`
  position: absolute;
  right: 48px;
  bottom: 7px;
  display: flex;
  align-items: center;
  gap: 6px;
  font-family: Roboto, sans-serif;
  font-size: 32px;
  line-height: 40px;
  color: #f4f4f4;
  text-shadow: 0 0 2px #bdbdbd, 0 0 4px #d5d5d5;
  pointer-events: none;
`;

/* Dialog */

const Overlay = styled.div`
  position: absolute;
  inset: 0;
  display: flex;
  justify-content: center;
  align-items: flex-start;
  padding-top: 100px;
  pointer-events: none;
`;

const Dialog = styled.section`
  width: 542px;
  background: #f0f0f0;
  border: 1px solid #666;
  pointer-events: auto;
`;

const DialogTitle = styled.header`
  display: flex;
  align-items: center;
  justify-content: space-between;
  height: 30px;
  padding: 0 10px 0 8px;
  background: #fff;
`;

const DialogClose = styled.button`
  padding: 0;
`;

const DialogBody = styled.div`
  display: flex;
  flex-direction: column;
  padding: 6px 7px 8px 6px;
`;

const TopSections = styled.div`
  display: grid;
  grid-template-columns: 222px 1fr;
  gap: 9px;
`;

const Section = styled.div`
  padding-left: ${({ $left }) => $left || 0}px;
`;

const Legend = styled.h2`
  display: flex;
  align-items: center;
  gap: 4px;
  font-size: 11px;
  line-height: 16px;

  &::after {
    content: "";
    flex: 1;
    border-top: 1px solid #a0a0a0;
  }
`;

const SettingsGrid = styled.div`
  display: grid;
  grid-template-columns: 26px 56px 96px;
  column-gap: 11px;
  row-gap: 3px;
  align-items: center;
  justify-content: end;
  margin-top: 5px;

  label {
    white-space: nowrap;
    grid-column: 2;
  }

  > svg {
    grid-column: 1;
    grid-row: 1 / 3;
    align-self: start;
    margin-top: 2px;
  }
`;

const SelectBox = styled.div`
  display: grid;
  align-items: center;
  height: 21px;
  background: ${({ $disabled }) => ($disabled ? "#cccccc" : "#e3e3e3")};
  border: 1px solid ${({ $disabled }) => ($disabled ? "#bfbfbf" : "#a0a0a0")};
  color: ${({ $disabled }) => ($disabled ? "#838383" : "#000")};

  select {
    grid-area: 1 / 1;
    appearance: none;
    padding-left: 3px;
    opacity: 1;
  }

  svg {
    grid-area: 1 / 1;
    justify-self: end;
    margin-right: 4px;
    pointer-events: none;
  }
`;

const CheckLabel = styled.label`
  display: flex;
  align-items: center;
  gap: 3px;
  margin-left: ${({ $indent }) => ($indent ? 18 : 0)}px;
  color: ${({ $disabled }) => ($disabled ? "#6d6d6d" : "#000")};
  white-space: nowrap;

  input {
    appearance: none;
    width: 13px;
    height: 13px;
    background: #fff;
    border: 1px solid ${({ $disabled }) => ($disabled ? "#cccccc" : "#333")};
  }
`;

const CheckList = styled.div`
  display: flex;
  flex-direction: column;
  gap: 3px;
`;

const ArchiveRow = styled.div`
  padding: 17px 0 2px 41px;
`;

const SecurityRow = styled.div`
  display: flex;
  gap: 8px;
  padding: 5px 0 0 10px;
`;

const TrackingRow = styled.div`
  display: flex;
  gap: 8px;
  padding: 5px 0 7px 11px;

  svg {
    margin: 2px 0 0;
  }
`;

const DeliveryGrid = styled.div`
  display: grid;
  grid-template-columns: 32px 101px 1fr;
  column-gap: 9px;
  row-gap: 3px;
  align-items: center;
  padding: 5px 0 0 9px;

  > svg {
    grid-row: 1 / 3;
    align-self: start;
  }
`;

const MutedLabel = styled.label`
  color: #a0a0a0;
  white-space: nowrap;
`;

const TextBox = styled.input`
  width: 100%;
  height: 20px;
  padding: 0 4px;
  background: ${({ disabled }) => (disabled ? "#f0f0f0" : "#fff")};
  border: 1px solid #a0a0a0;
`;

const ExpiryFields = styled.div`
  display: flex;
  gap: 10px;
`;

const Combo = styled.div`
  display: flex;
  width: 131px;
  height: 20px;
  color: #6d6d6d;

  select {
    flex: 1;
    appearance: none;
    padding-left: 3px;
    border: 1px solid #a0a0a0;
    opacity: 1;
  }

  span {
    display: grid;
    place-items: center;
    width: 17px;
    margin: 1px 0;
    background: #e1e1e1;
    border: 1px solid #a0a0a0;
  }
`;

const ContactsGrid = styled.div`
  display: grid;
  grid-template-columns: 94px 1fr;
  column-gap: 9px;
  row-gap: 6px;
  align-items: start;
  padding: 8px 0 0 10px;
`;

const DialogButton = styled.button`
  display: flex;
  align-items: center;
  justify-content: ${({ $menu }) => ($menu ? "space-between" : "center")};
  height: 21px;
  padding: 0 ${({ $menu }) => ($menu ? "4px 0 11px" : "0")};
  background: #e1e1e1;
  border: 1px solid #adadad;
`;

const CategoriesBox = styled.input`
  width: auto;
  height: 18px;
  margin: 0 2px;
  padding: 0 8px;
  background: #fff;
  border: 1px solid #666;
`;

const HeadersRow = styled.div`
  display: grid;
  grid-template-columns: 94px 1fr;
  column-gap: 10px;
  padding: 21px 0 0 9px;
`;

const HeadersBox = styled.div`
  display: flex;
  height: 97px;
  border: 1px solid #a0a0a0;
  padding: 3px 2px 1px 3px;

  textarea {
    flex: 1;
    padding-top: 3px;
    line-height: 13px;
    white-space: pre;
    tab-size: 28px;
    overflow: hidden;
    resize: none;
    outline: none;
  }

  > div {
    margin-bottom: 3px;
  }
`;

const DialogFooter = styled.footer`
  display: flex;
  justify-content: flex-end;
  padding-top: 4px;
`;

const DefaultButton = styled.button`
  width: 73px;
  height: 21px;
  background: #e1e1e1;
  border: 2px solid #0078d7;
  line-height: 16px;
`;

/* Taskbar */

const TaskbarRow = styled.footer`
  display: flex;
  height: 40px;
  background: linear-gradient(90deg, #001722, #000a1a);
  color: #fff;
`;

const TaskButton = styled.button`
  display: grid;
  place-items: center;
  width: 48px;
`;

const Apps = styled.div`
  display: flex;
  padding-left: 3px;
`;

const AppButton = styled.button`
  display: grid;
  place-items: center;
  width: 49px;
  background-color: ${({ $active }) => ($active ? "#33464f" : "transparent")};
  background-image: ${({ $active, $running }) =>
    $active || $running ? "linear-gradient(#76b9ed, #76b9ed)" : "none"};
  background-repeat: no-repeat;
  background-position: bottom center;
  background-size: ${({ $active }) => ($active ? "100%" : "40px")} 3px;
`;

const SearchBox = styled.div`
  display: flex;
  align-items: center;
  gap: 9px;
  width: 288px;
  padding-left: 12px;
  background: #f0f0f0;
  border: 1px solid #b5b5b5;

  input {
    flex: 1;
    min-width: 0;
    font-size: 14px;
    line-height: 20px;
    outline: none;
  }

  input::placeholder {
    color: #333;
    opacity: 1;
  }
`;

const Tray = styled.div`
  display: flex;
  align-items: center;
  margin-left: auto;
  padding-right: 4px;
`;

const TrayButton = styled.button`
  display: grid;
  place-items: center;
  width: 24px;
  height: 40px;
`;

const Clock = styled.time`
  display: flex;
  flex-direction: column;
  align-items: center;
  width: 64px;
  line-height: 18px;
`;

const NotificationButton = styled.button`
  display: grid;
  place-items: center;
  width: 49px;
  height: 40px;
  padding-right: 8px;
  border-right: 1px solid #3a4450;
`;

export default App;
